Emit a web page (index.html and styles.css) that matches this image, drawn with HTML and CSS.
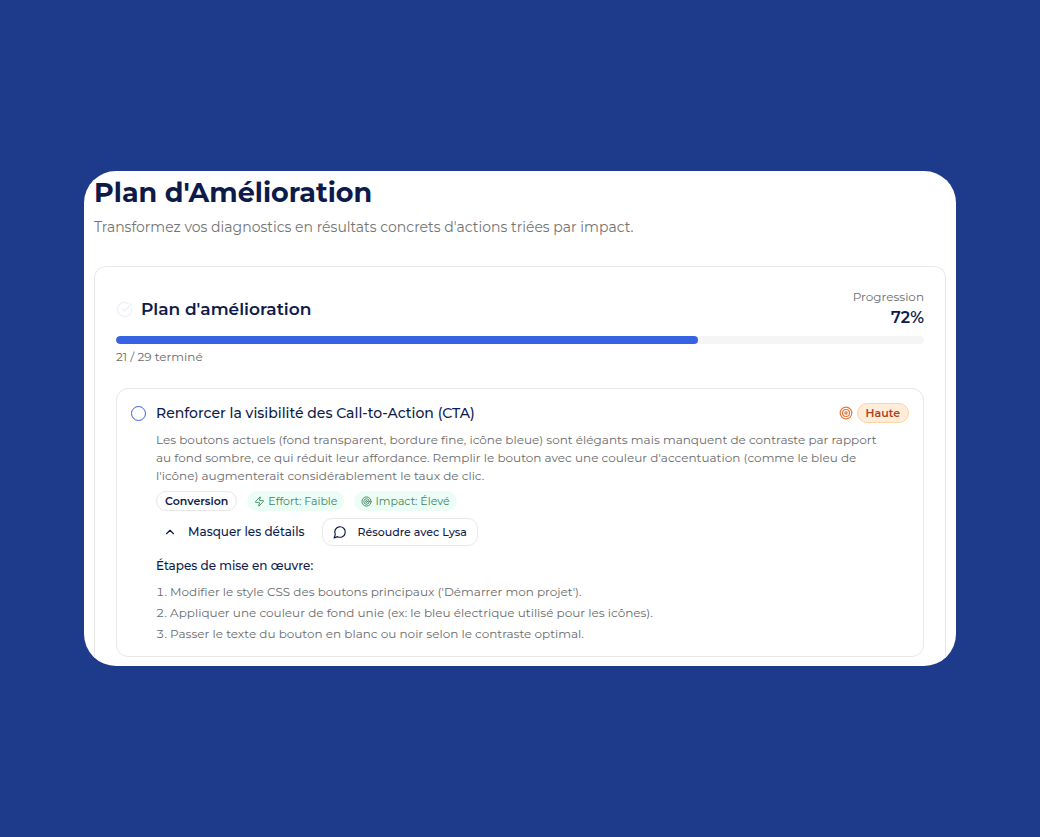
FILE: index.html
```html
<!DOCTYPE html>
<html lang="fr">
<head>
  <meta charset="UTF-8">
  <meta name="viewport" content="width=device-width, initial-scale=1.0">
  <title>Plan d'Amélioration</title>
  <link rel="stylesheet" href="styles.css">
</head>
<body>
  <main class="panel">
    <h1 class="page-title">Plan d'Amélioration</h1>
    <p class="page-intro">Transformez vos diagnostics en résultats concrets d'actions triées par impact.</p>

    <section class="plan">
      <div class="plan-header">
        <svg class="plan-icon" viewBox="0 0 24 24"><path d="M21.8 10A10 10 0 1 1 17 3.34"/><path d="m9 11 3 3L22 4"/></svg>
        <h2 class="plan-title">Plan d'amélioration</h2>
        <div class="plan-score">
          <div class="score-label">Progression</div>
          <div class="score-value">72%</div>
        </div>
      </div>
      <div class="bar" role="progressbar" aria-valuenow="72" aria-valuemin="0" aria-valuemax="100">
        <div class="bar-fill" style="width: 72%"></div>
      </div>
      <p class="plan-count">21 / 29 terminé</p>

      <article class="task">
        <div class="task-header">
          <input class="task-check" type="checkbox" id="task-cta">
          <label class="task-title" for="task-cta">Renforcer la visibilité des Call-to-Action (CTA)</label>
          <svg class="priority-icon" viewBox="0 0 24 24"><circle cx="12" cy="12" r="10"/><circle cx="12" cy="12" r="6"/><circle cx="12" cy="12" r="2"/></svg>
          <span class="priority">Haute</span>
        </div>
        <div class="task-body">
          <p class="task-text">Les boutons actuels (fond transparent, bordure fine, icône bleue) sont élégants mais manquent de contraste par rapport au fond sombre, ce qui réduit leur affordance. Remplir le bouton avec une couleur d'accentuation (comme le bleu de l'icône) augmenterait considérablement le taux de clic.</p>
          <div class="tags">
            <span class="tag tag-outline">Conversion</span>
            <span class="tag tag-green">
              <svg viewBox="0 0 24 24"><path d="M4 14a1 1 0 0 1-.78-1.63l9.9-10.2a.5.5 0 0 1 .86.46l-1.92 6.02A1 1 0 0 0 13 10h7a1 1 0 0 1 .78 1.63l-9.9 10.2a.5.5 0 0 1-.86-.46l1.92-6.02A1 1 0 0 0 11 14z"/></svg>
              Effort: Faible
            </span>
            <span class="tag tag-green">
              <svg viewBox="0 0 24 24"><circle cx="12" cy="12" r="10"/><circle cx="12" cy="12" r="6"/><circle cx="12" cy="12" r="2"/></svg>
              Impact: Élevé
            </span>
          </div>
          <div class="actions">
            <button class="btn btn-toggle" type="button">
              <svg viewBox="0 0 24 24"><path d="m18 15-6-6-6 6"/></svg>
              Masquer les détails
            </button>
            <button class="btn btn-chat" type="button">
              <svg viewBox="0 0 24 24"><path d="M7.9 20A9 9 0 1 0 4 16.1L2 22Z"/></svg>
              Résoudre avec Lysa
            </button>
          </div>
          <h3 class="steps-title">Étapes de mise en œuvre:</h3>
          <ol class="steps">
            <li>Modifier le style CSS des boutons principaux ('Démarrer mon projet').</li>
            <li>Appliquer une couleur de fond unie (ex: le bleu électrique utilisé pour les icônes).</li>
            <li>Passer le texte du bouton en blanc ou noir selon le contraste optimal.</li>
          </ol>
        </div>
      </article>
    </section>
  </main>
</body>
</html>
```
FILE: styles.css
```css
* {
  box-sizing: border-box;
  margin: 0;
  padding: 0;
}
body {
  display: flex;
  align-items: center;
  min-height: 100vh;
  padding: 24px 84px;
  background: #1e3a8a;
  color: #0d1b4a;
  font-family: Montserrat, Inter, sans-serif;
  font-size: 12px;
  line-height: 18px;
}
svg {
  flex: none;
  fill: none;
  stroke: currentColor;
  stroke-width: 2;
  stroke-linecap: round;
  stroke-linejoin: round;
}
.panel {
  flex: 1;
  padding: 4px 10px 0;
  border-radius: 32px;
  background: #fff;
  overflow: hidden;
}
.page-title {
  font-size: 27px;
  font-weight: 700;
  line-height: 36px;
}
.page-intro {
  margin: 4px 0 27px;
  color: #737373;
  font-size: 14px;
  line-height: 24px;
}

/* plan */
.plan {
  padding: 21px 21px 9px;
  border: 1px solid #e8e8e8;
  border-bottom: 0;
  border-radius: 12px 12px 0 0;
}
.plan-header {
  display: flex;
  align-items: center;
  gap: 8px;
}
.plan-icon {
  width: 17px;
  height: 17px;
  color: #eef0fa;
}
.plan-title {
  flex: 1;
  font-size: 17px;
  font-weight: 600;
  line-height: 24px;
}
.plan-score {
  text-align: right;
}
.score-label {
  color: #6b6b6b;
}
.score-value {
  font-size: 16px;
  font-weight: 600;
  line-height: 24px;
}
.bar {
  height: 8px;
  margin: 6px 0 4px;
  border-radius: 4px;
  background: #f5f5f5;
  overflow: hidden;
}
.bar-fill {
  height: 100%;
  border-radius: 4px;
  background: #3762e3;
}
.plan-count {
  color: #6b6b6b;
}

/* task */
.task {
  margin-top: 22px;
  padding: 14px 14px 12px;
  border: 1px solid #e8e8e8;
  border-radius: 12px;
}
.task-header {
  display: flex;
  align-items: center;
}
.task-check {
  appearance: none;
  width: 15px;
  height: 15px;
  margin-right: 10px;
  border: 1px solid #3762e3;
  border-radius: 50%;
}
.task-check:checked {
  background: #3762e3;
}
.task-title {
  flex: 1;
  font-size: 14px;
  font-weight: 500;
  line-height: 20px;
}
.priority-icon {
  width: 14px;
  height: 14px;
  margin-right: 4px;
  color: #e8743b;
}
.priority {
  padding: 0 8px;
  border: 1px solid #fbd5a8;
  border-radius: 10px;
  background: #ffedd9;
  color: #b0431c;
  font-size: 11px;
  font-weight: 600;
}
.task-body {
  padding-left: 25px;
}
.task-text {
  margin-top: 8px;
  padding-right: 20px;
  color: #6b6b6b;
}
.tags {
  display: flex;
  gap: 10px;
  margin-top: 6px;
}
.tag {
  display: flex;
  align-items: center;
  gap: 3px;
  padding: 0 6px;
  border: 1px solid transparent;
  border-radius: 10px;
  font-size: 11px;
}
.tag svg {
  width: 11px;
  height: 11px;
}
.tag-outline {
  padding: 0 8px;
  border-color: #e8e8e8;
  font-weight: 600;
}
.tag-green {
  background: #ecfdf5;
  color: #3f8562;
}
.actions {
  display: flex;
  gap: 14px;
  margin-top: 7px;
}
.btn {
  display: flex;
  align-items: center;
  gap: 11px;
  height: 28px;
  border: 1px solid transparent;
  border-radius: 10px;
  background: none;
  color: inherit;
  font: inherit;
  font-weight: 500;
  cursor: pointer;
}
.btn svg {
  width: 14px;
  height: 14px;
}
.btn-toggle {
  padding: 0 2px 0 6px;
}
.btn-chat {
  padding: 0 10px;
  border-color: #e8e8e8;
  font-size: 11px;
}
.steps-title {
  margin: 10px 0 5px;
  font-size: 12px;
  font-weight: 500;
  line-height: 20px;
}
.steps {
  list-style-position: inside;
  color: #6b6b6b;
  line-height: 21px;
}
```
